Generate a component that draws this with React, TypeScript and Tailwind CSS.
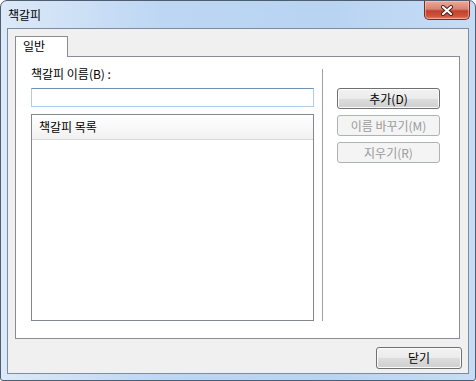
import React from "react";

function CloseButton() {
  return (
    <div className="ml-auto mr-[5px] w-[46px] h-[19px] rounded-b-[5px] border border-t-0 border-[#7a2b22] bg-[linear-gradient(180deg,#eaa99b_0%,#d9836f_45%,#c0412b_55%,#d0553d_85%,#e08a70_100%)] flex items-center justify-center shadow-[inset_0_0_0_1px_rgba(255,220,210,0.45)]">
      <svg width="14" height="11" viewBox="0 0 14 11">
        <path d="M3 2 L11 9 M11 2 L3 9" stroke="#4a1a14" strokeWidth="4" strokeLinecap="round" />
        <path d="M3 2 L11 9 M11 2 L3 9" stroke="#ffffff" strokeWidth="2.2" strokeLinecap="round" />
      </svg>
    </div>
  );
}

function Btn({ label, disabled, className = "" }: { label: string; disabled?: boolean; className?: string }) {
  return (
    <div
      className={
        "h-[21px] rounded-[3px] border flex items-center justify-center text-[12px] leading-[14px] " +
        (disabled
          ? "border-[#adb2b5] bg-[#f4f4f4] text-[#9a9a9a] "
          : "border-[#707070] bg-[linear-gradient(180deg,#f2f2f2_0%,#ebebeb_50%,#dddddd_50%,#cfcfcf_100%)] text-black shadow-[inset_0_0_0_1px_#fcfcfc] ") +
        className
      }
    >
      {label}
    </div>
  );
}

export default function App() {
  return (
    <div className="w-[476px] h-[381px] bg-white font-['Noto_Sans_CJK_KR','Noto_Sans',sans-serif]">
      <div className="w-[476px] h-[381px] flex flex-col border border-[#4f5d70] rounded-t-[7px] rounded-b-[3px] bg-[linear-gradient(90deg,#dce9f8_0%,#bcd6f3_35%,#b9d4f2_70%,#c6dcf4_100%)]">
        <div className="h-[27px] flex items-start shrink-0">
          <span className="ml-[7px] mt-[7px] text-[12px] leading-[14px] text-black">책갈피</span>
          <CloseButton />
        </div>
        <div className="flex-1 mx-[6px] mb-[6px] border border-[#7d8ca0] bg-[#f0f0f0] flex flex-col pl-[7px] pr-[6px] pt-[7px] pb-[4px]">
          <div className="flex shrink-0">
            <div className="relative z-10 w-[53px] h-[21px] -mb-px border border-b-0 border-[#898c95] bg-white text-[12px] leading-[14px] text-black pl-[7px] pt-[2px]">
              일반
            </div>
          </div>
          <div className="h-[283px] mr-[2px] border border-[#898c95] bg-white flex pl-[15px] pt-[10px] pb-[17px]">
            <div className="w-[283px] flex flex-col">
              <div className="h-[14px] text-[12px] leading-[14px] text-black">책갈피 이름(B) :</div>
              <div className="mt-[7px] h-[19px] border border-[#aecbe7] border-t-[#6f92b8] bg-white" />
              <div className="mt-[7px] flex-1 border border-[#828790] bg-white flex flex-col">
                <div className="h-[25px] border-b border-[#d8d8d8] bg-[linear-gradient(180deg,#ffffff_0%,#f7f7f7_60%,#f1f1f1_100%)] pl-[7px] flex items-center text-[12px] leading-[14px] text-black">
                  책갈피 목록
                </div>
              </div>
            </div>
            <div className="ml-[8px] mt-[2px] w-px bg-[#a0a0a0]" />
            <div className="ml-[14px] w-[103px] flex flex-col gap-[6px] pt-[21px]">
              <Btn label="추가(D)" />
              <Btn label="이름 바꾸기(M)" disabled />
              <Btn label="지우기(R)" disabled />
            </div>
          </div>
          <div className="flex-1" />
          <div className="flex justify-end">
            <Btn label="닫기" className="w-[86px] h-[22px]" />
          </div>
        </div>
      </div>
    </div>
  );
}
